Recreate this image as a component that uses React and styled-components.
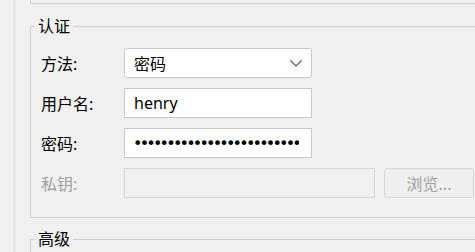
import React from 'react';
import styled, { createGlobalStyle } from 'styled-components';

const GlobalStyle = createGlobalStyle`
  html, body {
    margin: 0;
    padding: 0;
    background: #f0f0f0;
    overflow: hidden;
  }
  body {
    font-family: "Noto Sans", "Noto Sans CJK SC", sans-serif;
    font-size: 16px;
    color: #000;
  }
`;

// Outer tab page, its left edge is visible at x=14
const Page = styled.div`
  margin-left: 14px;
  height: 252px;
  border-left: 1px solid #d9d9d9;
  padding-left: 15px;
`;

// bottom of the group box that sits above (mostly scrolled off)
const PrevBox = styled.div`
  height: 3px;
  width: 470px;
  border-left: 1px solid #d0d0d0;
  border-bottom: 1px solid #d0d0d0;
`;

const Group = styled.fieldset`
  margin: ${p => p.$top}px 0 0 0;
  width: 470px;
  padding: 12px 0 19px 10px;
  border: 1px solid #d0d0d0;
  border-radius: 0;
`;

const Legend = styled.legend`
  margin-left: -6px;
  padding: 0 3px;
  font-size: 16px;
  line-height: 20px;
`;

const Rows = styled.div`
  display: flex;
  flex-direction: column;
  gap: 10px;
`;

const Row = styled.div`
  display: flex;
  align-items: center;
  height: 30px;
`;

const Label = styled.span`
  width: 83px;
  flex-shrink: 0;
  color: ${p => (p.$disabled ? '#a0a0a0' : '#000')};
`;

const Field = styled.div`
  box-sizing: border-box;
  width: ${p => p.$w}px;
  height: 30px;
  display: flex;
  align-items: center;
  padding: 0 9px;
  background: ${p => (p.$disabled ? '#f0f0f0' : '#fff')};
  border: 1px solid ${p => (p.$disabled ? '#d6d6d6' : '#c8c8c8')};
  border-radius: ${p => (p.$round ? 3 : 0)}px;
  font-size: 16px;
`;

const Value = styled.span`
  flex: 1;
`;

const Dots = styled.div`
  flex: 1;
  overflow: hidden;
  display: flex;
  justify-content: flex-end;
  white-space: nowrap;
  font-family: "DejaVu Sans", sans-serif;
  font-size: 16px;
  letter-spacing: -2.8px;
  margin-right: 3px;
`;

const Browse = styled.button`
  box-sizing: border-box;
  margin-left: 9px;
  width: 90px;
  height: 30px;
  background: #efefef;
  border: 1px solid #d6d6d6;
  border-radius: 3px;
  color: #a0a0a0;
  font-family: inherit;
  font-size: 16px;
  padding: 0;
`;

const Chevron = () => (
  <svg width="12" height="7" viewBox="0 0 12 7">
    <polyline points="0.5,0.5 6,6 11.5,0.5" fill="none" stroke="#555" strokeWidth="1.1" />
  </svg>
);

export default function App() {
  return (
    <>
      <GlobalStyle />
      <Page>
        <PrevBox />
        <Group $top={12}>
          <Legend>认证</Legend>
          <Rows>
            <Row>
              <Label>方法:</Label>
              <Field $w={188} $round>
                <Value>密码</Value>
                <Chevron />
              </Field>
            </Row>
            <Row>
              <Label>用户名:</Label>
              <Field $w={188}>
                <Value>henry</Value>
              </Field>
            </Row>
            <Row>
              <Label>密码:</Label>
              <Field $w={188}>
                <Dots>{'•'.repeat(32)}</Dots>
              </Field>
            </Row>
            <Row>
              <Label $disabled>私钥:</Label>
              <Field $w={251} $disabled />
              <Browse disabled>浏览...</Browse>
            </Row>
          </Rows>
        </Group>
        <Group $top={11}>
          <Legend>高级</Legend>
        </Group>
      </Page>
    </>
  );
}
